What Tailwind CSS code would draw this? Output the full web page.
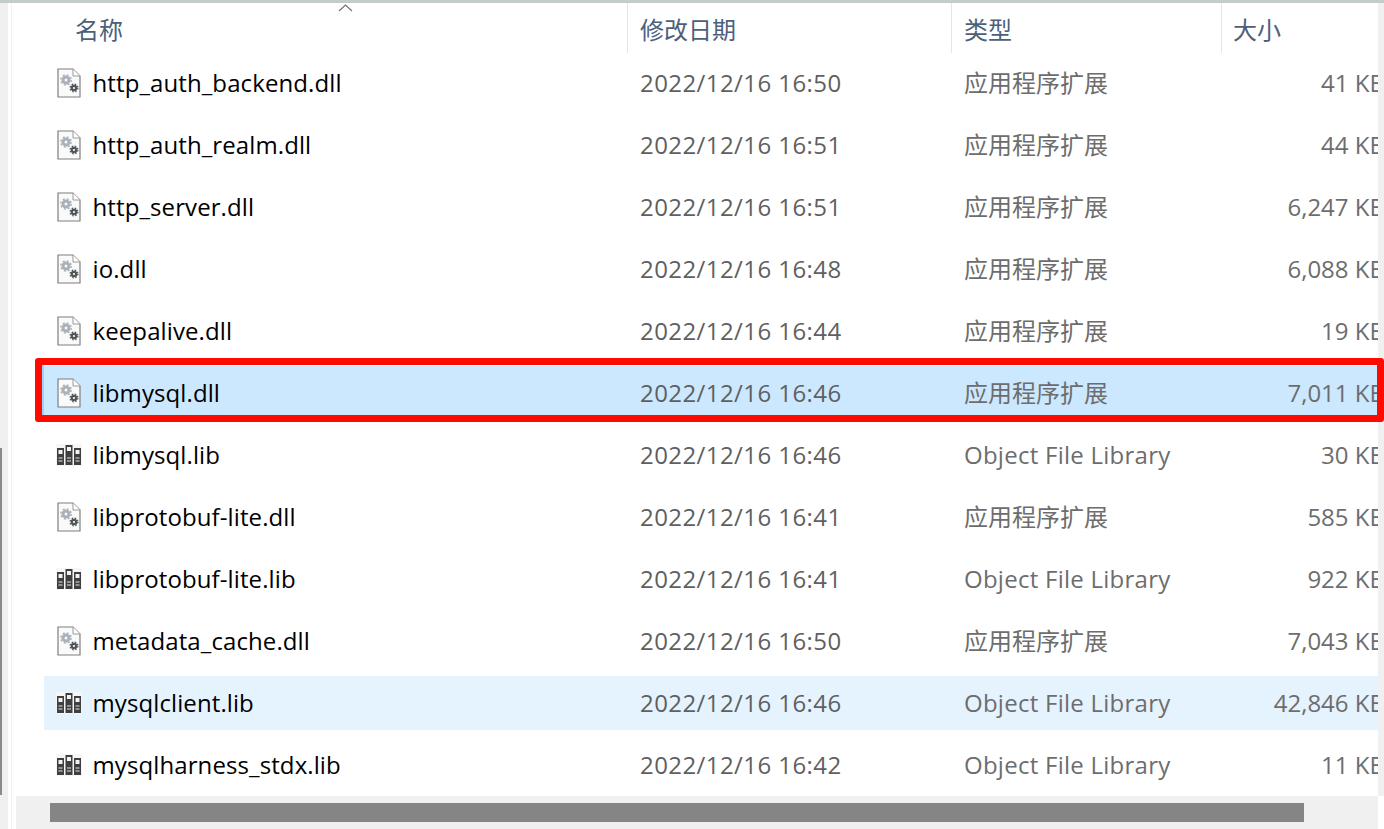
<!DOCTYPE html>
<html lang="zh-CN">
<head>
  <meta charset="UTF-8">
  <title>文件列表</title>
  <script src="https://cdn.jsdelivr.net/npm/@tailwindcss/browser@4"></script>
</head>
<body class="bg-white h-[829px] w-[1384px] overflow-hidden font-['Open_Sans','Noto_Sans_CJK_SC',sans-serif] text-[24px]">
  <svg class="hidden">
    <symbol id="dll" viewBox="0 0 24 30">
      <path d="M1 1H16L23 8V29H1Z" fill="#fafafa" stroke="#7f7f7f" stroke-width="1.2"/>
      <path d="M16 1V8H23" fill="#fff" stroke="#9a9a9a" stroke-width="1"/>
      <circle cx="9" cy="12" r="3" fill="none" stroke="#a9b0b8" stroke-width="3"/>
      <circle cx="9" cy="12" r="5.2" fill="none" stroke="#a9b0b8" stroke-width="1.4" stroke-dasharray="2 2.1"/>
      <circle cx="17" cy="20" r="2.2" fill="none" stroke="#505558" stroke-width="2.2"/>
      <circle cx="17" cy="20" r="3.9" fill="none" stroke="#505558" stroke-width="1.2" stroke-dasharray="1.6 1.5"/>
    </symbol>
    <symbol id="lib" viewBox="0 0 26 22">
      <rect width="26" height="22" fill="#f6f6f6"/>
      <path d="M1 4H8V21H1ZM9.500 1H16.500V21H9.500ZM18 4H25V21H18Z" fill="#3f3f3f"/>
      <path d="M2.500 6H6.500V10H2.500ZM11 3H15V7H11ZM19.500 6H23.500V10H19.500Z" fill="#f2f2f2"/>
      <path d="M2.500 14H6.500M2.500 17H6.500M11 14H15M11 17H15M19.500 14H23.500M19.500 17H23.500" stroke="#e8e8e8" stroke-width="1.200"/>
    </symbol>
  </svg>

  <div class="flex h-full">
    <!-- left window edge -->
    <div class="w-[8px] bg-[#f0f0f0] flex flex-col justify-end shrink-0">
      <div class="w-[2px] h-[347px] mb-[34px] bg-[#8a8a8a]"></div>
    </div>
    <div class="w-[3px] shrink-0"></div>
    <div class="w-[1px] bg-[#f0f0f0] shrink-0"></div>

    <div class="flex-1 flex flex-col min-w-0">
      <div class="h-[3px] bg-[#c3cbcb] -ml-[12px] shrink-0"></div>

      <div class="flex-1 flex min-h-0">
        <div class="flex-1 flex flex-col min-w-0">
          <!-- header -->
          <div class="relative h-[50px] flex text-[#4c607a] shrink-0">
            <svg class="absolute left-[326px] top-[0px]" width="16" height="9" viewBox="0 0 16 9" fill="none" stroke="#707070" stroke-width="1.100"><path d="M1 8L7.500 2L14 8"/></svg>
            <div class="w-[616px] pl-[63px] pt-[9px] border-r border-[#e5e5e5]">名称</div>
            <div class="w-[324px] pl-[12px] pt-[9px] border-r border-[#e5e5e5]">修改日期</div>
            <div class="w-[270px] pl-[12px] pt-[9px] border-r border-[#e5e5e5]">类型</div>
            <div class="flex-1 pl-[11px] pt-[9px]">大小</div>
          </div>

          <!-- rows -->
          <div class="flex-1 flex flex-col gap-[8px] pt-[3px] pl-[32px] min-h-0">
            <div class="h-[54px] flex items-center shrink-0 overflow-hidden"><svg class="w-[24px] h-[30px] ml-[13px] mr-[11.500px] shrink-0"><use href="#dll"/></svg><div class="w-[547.500px] shrink-0 text-black tracking-[0.1px]">http_auth_backend.dll</div><div class="w-[324px] shrink-0 text-[#5f5f5f] tracking-[0.42px]">2022/12/16 16:50</div><div class="w-[250px] shrink-0 text-[#6d6d6d]">应用程序扩展</div><div class="w-[171px] shrink-0 text-right whitespace-nowrap text-[#6d6d6d]">41 KB</div></div>
            <div class="h-[54px] flex items-center shrink-0 overflow-hidden"><svg class="w-[24px] h-[30px] ml-[13px] mr-[11.500px] shrink-0"><use href="#dll"/></svg><div class="w-[547.500px] shrink-0 text-black tracking-[0.1px]">http_auth_realm.dll</div><div class="w-[324px] shrink-0 text-[#5f5f5f] tracking-[0.42px]">2022/12/16 16:51</div><div class="w-[250px] shrink-0 text-[#6d6d6d]">应用程序扩展</div><div class="w-[171px] shrink-0 text-right whitespace-nowrap text-[#6d6d6d]">44 KB</div></div>
            <div class="h-[54px] flex items-center shrink-0 overflow-hidden"><svg class="w-[24px] h-[30px] ml-[13px] mr-[11.500px] shrink-0"><use href="#dll"/></svg><div class="w-[547.500px] shrink-0 text-black tracking-[0.1px]">http_server.dll</div><div class="w-[324px] shrink-0 text-[#5f5f5f] tracking-[0.42px]">2022/12/16 16:51</div><div class="w-[250px] shrink-0 text-[#6d6d6d]">应用程序扩展</div><div class="w-[171px] shrink-0 text-right whitespace-nowrap text-[#6d6d6d]">6,247 KB</div></div>
            <div class="h-[54px] flex items-center shrink-0 overflow-hidden"><svg class="w-[24px] h-[30px] ml-[13px] mr-[11.500px] shrink-0"><use href="#dll"/></svg><div class="w-[547.500px] shrink-0 text-black tracking-[0.1px]">io.dll</div><div class="w-[324px] shrink-0 text-[#5f5f5f] tracking-[0.42px]">2022/12/16 16:48</div><div class="w-[250px] shrink-0 text-[#6d6d6d]">应用程序扩展</div><div class="w-[171px] shrink-0 text-right whitespace-nowrap text-[#6d6d6d]">6,088 KB</div></div>
            <div class="h-[54px] flex items-center shrink-0 overflow-hidden"><svg class="w-[24px] h-[30px] ml-[13px] mr-[11.500px] shrink-0"><use href="#dll"/></svg><div class="w-[547.500px] shrink-0 text-black tracking-[0.1px]">keepalive.dll</div><div class="w-[324px] shrink-0 text-[#5f5f5f] tracking-[0.42px]">2022/12/16 16:44</div><div class="w-[250px] shrink-0 text-[#6d6d6d]">应用程序扩展</div><div class="w-[171px] shrink-0 text-right whitespace-nowrap text-[#6d6d6d]">19 KB</div></div>
            <div class="relative h-[54px] flex items-center shrink-0 bg-[#cce8ff]">
              <svg class="w-[24px] h-[30px] ml-[13px] mr-[11.500px] shrink-0"><use href="#dll"/></svg><div class="w-[547.500px] shrink-0 text-black tracking-[0.1px]">libmysql.dll</div><div class="w-[324px] shrink-0 text-[#5f5f5f] tracking-[0.42px]">2022/12/16 16:46</div><div class="w-[250px] shrink-0 text-[#6d6d6d]">应用程序扩展</div><div class="w-[164px] h-[30px] overflow-hidden shrink-0"><div class="w-[171px] text-right whitespace-nowrap text-[#6d6d6d] leading-[30px]">7,011 KB</div></div>
              <div class="absolute -left-[9px] -top-[8px] w-[1349px] h-[64px] border-[7px] border-[#fe0b00] rounded-[3px]">
                <div class="absolute left-0 top-0 bottom-0 w-[2px] bg-[#99d1ff]"></div>
              </div>
            </div>
            <div class="h-[54px] flex items-center shrink-0 overflow-hidden"><svg class="w-[26px] h-[22px] ml-[12px] mr-[10.500px] shrink-0"><use href="#lib"/></svg><div class="w-[547.500px] shrink-0 text-black tracking-[0.1px]">libmysql.lib</div><div class="w-[324px] shrink-0 text-[#5f5f5f] tracking-[0.42px]">2022/12/16 16:46</div><div class="w-[250px] shrink-0 text-[#6d6d6d] tracking-[0.26px]">Object File Library</div><div class="w-[171px] shrink-0 text-right whitespace-nowrap text-[#6d6d6d]">30 KB</div></div>
            <div class="h-[54px] flex items-center shrink-0 overflow-hidden"><svg class="w-[24px] h-[30px] ml-[13px] mr-[11.500px] shrink-0"><use href="#dll"/></svg><div class="w-[547.500px] shrink-0 text-black tracking-[0.1px]">libprotobuf-lite.dll</div><div class="w-[324px] shrink-0 text-[#5f5f5f] tracking-[0.42px]">2022/12/16 16:41</div><div class="w-[250px] shrink-0 text-[#6d6d6d]">应用程序扩展</div><div class="w-[171px] shrink-0 text-right whitespace-nowrap text-[#6d6d6d]">585 KB</div></div>
            <div class="h-[54px] flex items-center shrink-0 overflow-hidden"><svg class="w-[26px] h-[22px] ml-[12px] mr-[10.500px] shrink-0"><use href="#lib"/></svg><div class="w-[547.500px] shrink-0 text-black tracking-[0.1px]">libprotobuf-lite.lib</div><div class="w-[324px] shrink-0 text-[#5f5f5f] tracking-[0.42px]">2022/12/16 16:41</div><div class="w-[250px] shrink-0 text-[#6d6d6d] tracking-[0.26px]">Object File Library</div><div class="w-[171px] shrink-0 text-right whitespace-nowrap text-[#6d6d6d]">922 KB</div></div>
            <div class="h-[54px] flex items-center shrink-0 overflow-hidden"><svg class="w-[24px] h-[30px] ml-[13px] mr-[11.500px] shrink-0"><use href="#dll"/></svg><div class="w-[547.500px] shrink-0 text-black tracking-[0.1px]">metadata_cache.dll</div><div class="w-[324px] shrink-0 text-[#5f5f5f] tracking-[0.42px]">2022/12/16 16:50</div><div class="w-[250px] shrink-0 text-[#6d6d6d]">应用程序扩展</div><div class="w-[171px] shrink-0 text-right whitespace-nowrap text-[#6d6d6d]">7,043 KB</div></div>
            <div class="h-[54px] flex items-center shrink-0 overflow-hidden bg-[#e5f3ff]"><svg class="w-[26px] h-[22px] ml-[12px] mr-[10.500px] shrink-0"><use href="#lib"/></svg><div class="w-[547.500px] shrink-0 text-black tracking-[0.1px]">mysqlclient.lib</div><div class="w-[324px] shrink-0 text-[#5f5f5f] tracking-[0.42px]">2022/12/16 16:46</div><div class="w-[250px] shrink-0 text-[#6d6d6d] tracking-[0.26px]">Object File Library</div><div class="w-[171px] shrink-0 text-right whitespace-nowrap text-[#6d6d6d]">42,846 KB</div></div>
            <div class="h-[54px] flex items-center shrink-0 overflow-hidden"><svg class="w-[26px] h-[22px] ml-[12px] mr-[10.500px] shrink-0"><use href="#lib"/></svg><div class="w-[547.500px] shrink-0 text-black tracking-[0.1px]">mysqlharness_stdx.lib</div><div class="w-[324px] shrink-0 text-[#5f5f5f] tracking-[0.42px]">2022/12/16 16:42</div><div class="w-[250px] shrink-0 text-[#6d6d6d] tracking-[0.26px]">Object File Library</div><div class="w-[171px] shrink-0 text-right whitespace-nowrap text-[#6d6d6d]">11 KB</div></div>
          </div>
        </div>
        <div class="w-[6px] bg-[#f0f0f0] shrink-0"></div>
      </div>

      <!-- scrollbar -->
      <div class="h-[33px] shrink-0 flex mr-[6px] ml-[4px] bg-[#f0f0f0] pl-[34px] items-center">
        <div class="w-[1254px] h-[19px] bg-[#858585]"></div>
      </div>
    </div>
  </div>
</body>
</html>
